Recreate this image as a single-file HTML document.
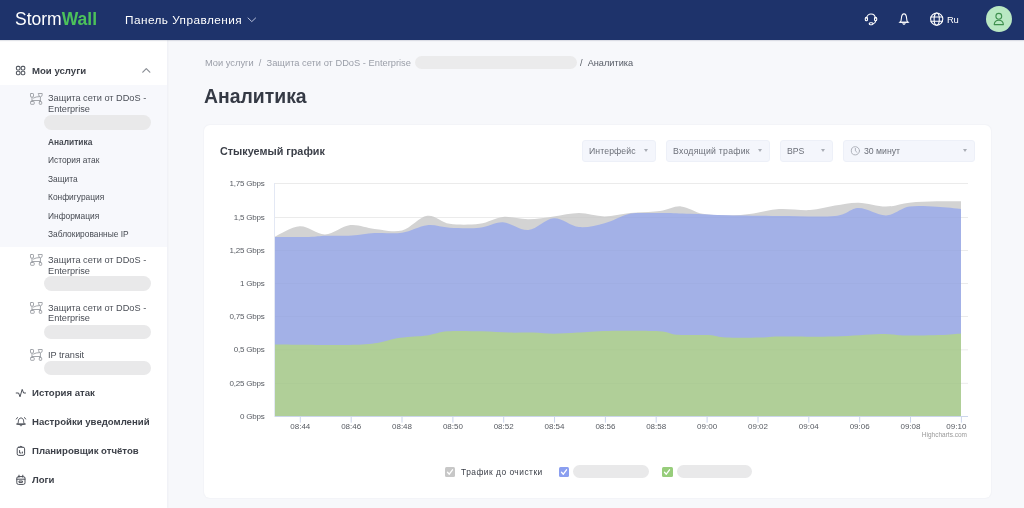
<!DOCTYPE html>
<html><head><meta charset="utf-8">
<style>
*{margin:0;padding:0;box-sizing:border-box}
html,body{width:1024px;height:508px;overflow:hidden;background:#f7f8fb;font-family:"Liberation Sans",sans-serif;color:#353a45}
.a{position:absolute;white-space:nowrap;line-height:1;will-change:transform}
#hdr{position:absolute;left:0;top:0;width:1024px;height:40px;background:#1e336b;box-shadow:0 1px 1px rgba(20,30,70,0.12);z-index:2}
#side{position:absolute;left:0;top:40px;width:167px;height:468px;background:#fff;box-shadow:1px 0 2px rgba(20,30,70,0.04)}
#sub{position:absolute;left:0;top:85px;width:167px;height:162px;background:#f7f8fc}
.pill{position:absolute;background:#e9e9ea;border-radius:8px}
.st{font-size:9.2px;color:#4b4f57}
.sb{font-size:9.6px;font-weight:bold;color:#3d4149}
.ss{font-size:8.4px;color:#464a52}
#card{position:absolute;left:204px;top:125px;width:787px;height:373px;background:#fff;border-radius:6px;box-shadow:0 0 2px rgba(30,40,80,0.07)}
.dd{position:absolute;top:140px;height:22px;background:#f4f6fc;border:1px solid #edf0f8;border-radius:3px;font-size:8.7px;color:#6b6f78;will-change:transform}
.dd span{position:absolute;top:6px;line-height:1}
.car{position:absolute;top:8px;width:0;height:0;border-left:2.5px solid transparent;border-right:2.5px solid transparent;border-top:3.8px solid #a9adb5}
.ch{position:absolute;left:0;top:0;will-change:transform}
.ic{position:absolute;left:0;top:0;z-index:3}
.cb{position:absolute;width:10px;height:10px;border-radius:1.5px;top:467px}
</style></head><body>
<div id="hdr">
  <div class="a" style="left:15px;top:10.5px;font-size:17.5px;color:#fff;letter-spacing:0px">Storm<span style="color:#4cc25a;font-weight:bold">Wall</span></div>
  <div class="a" style="left:125px;top:14.6px;font-size:11.8px;color:#fff;letter-spacing:0.45px">Панель Управления</div>
  <div class="a" style="left:946.5px;top:14.5px;font-size:9.4px;color:#fff;letter-spacing:-0.3px">Ru</div>
  <div style="position:absolute;left:986px;top:6px;width:26px;height:26px;border-radius:50%;background:#b9e8c3"></div>
</div>
<div id="side"></div>
<div id="sub"></div>
<div id="card"></div>
<svg class="ch" width="1024" height="508" viewBox="0 0 1024 508">
<line x1="274.8" y1="183.5" x2="968" y2="183.5" stroke="#efefef" stroke-width="1"/>
<line x1="274.8" y1="217.5" x2="968" y2="217.5" stroke="#efefef" stroke-width="1"/>
<line x1="274.8" y1="250.5" x2="968" y2="250.5" stroke="#efefef" stroke-width="1"/>
<line x1="274.8" y1="283.5" x2="968" y2="283.5" stroke="#efefef" stroke-width="1"/>
<line x1="274.8" y1="316.5" x2="968" y2="316.5" stroke="#efefef" stroke-width="1"/>
<line x1="274.8" y1="349.8" x2="968" y2="349.8" stroke="#efefef" stroke-width="1"/>
<line x1="274.8" y1="383.3" x2="968" y2="383.3" stroke="#efefef" stroke-width="1"/>
<path d="M274.8,236.7 C279.0,235.0 291.4,226.7 299.8,226.3 C308.2,225.9 316.6,234.6 325.0,234.4 C333.4,234.2 342.1,226.0 350.3,225.1 C358.6,224.2 365.9,228.0 374.5,228.9 C383.1,229.8 393.2,232.7 402.0,230.5 C410.8,228.3 419.2,216.9 427.2,215.8 C435.1,214.7 441.0,222.5 449.7,223.8 C458.4,225.1 470.6,224.9 479.5,223.8 C488.4,222.7 494.9,217.8 503.0,217.0 C511.1,216.2 519.9,219.4 528.4,219.3 C536.9,219.2 545.3,217.5 553.7,216.4 C562.1,215.3 570.5,213.0 579.0,213.0 C587.5,213.0 596.0,216.4 604.5,216.4 C613.0,216.4 620.8,213.9 630.0,213.0 C639.2,212.1 651.5,212.1 660.0,211.0 C668.5,209.9 673.9,205.9 681.0,206.4 C688.1,206.9 694.9,212.3 702.7,213.8 C710.5,215.3 719.5,215.5 728.0,215.4 C736.5,215.3 745.0,214.5 753.5,213.4 C762.0,212.3 769.6,209.7 779.0,209.1 C788.4,208.5 800.7,210.7 810.0,210.1 C819.3,209.5 826.9,206.8 835.0,205.6 C843.1,204.4 850.1,202.5 858.6,202.7 C867.1,202.9 877.5,206.6 886.0,206.6 C894.5,206.6 900.9,203.6 909.4,202.7 C917.9,201.8 928.1,201.5 936.7,201.3 C945.3,201.1 957.0,201.3 961.0,201.3 L961.0,416.3 L274.8,416.3 Z" fill="#d3d3d3"/>
<path d="M274.8,236.9 C280.5,236.9 300.5,237.1 309.0,236.9 C317.5,236.7 318.5,235.9 325.7,235.7 C332.9,235.5 343.9,236.0 352.0,235.6 C360.1,235.2 366.2,233.6 374.5,233.1 C382.8,232.6 393.2,234.0 402.0,232.7 C410.8,231.4 419.2,226.0 427.2,225.2 C435.1,224.4 441.0,227.3 449.7,227.7 C458.4,228.1 470.6,228.6 479.5,227.7 C488.4,226.8 494.9,221.8 503.0,222.2 C511.1,222.6 519.9,230.7 528.4,230.0 C536.9,229.3 545.3,218.8 553.7,218.3 C562.1,217.8 570.5,226.3 579.0,227.1 C587.5,227.9 596.3,225.3 604.5,223.2 C612.7,221.0 621.2,215.9 628.0,214.2 C634.8,212.5 638.8,213.2 645.0,213.0 C651.2,212.8 657.5,212.9 665.0,213.0 C672.5,213.1 679.5,213.4 690.0,213.8 C700.5,214.2 713.2,214.9 728.0,215.3 C742.8,215.7 761.2,215.9 779.0,216.0 C796.8,216.1 821.7,217.3 835.0,216.0 C848.3,214.7 850.1,208.1 858.6,208.0 C867.1,207.9 877.5,215.6 886.0,215.4 C894.5,215.2 900.9,208.0 909.4,206.6 C917.9,205.2 928.1,206.4 936.7,206.8 C945.3,207.2 957.0,208.6 961.0,209.0 L961.0,416.3 L274.8,416.3 Z" fill="#a3b1e7"/>
<path d="M274.8,344.6 C289.3,344.6 341.1,345.7 362.0,344.6 C382.9,343.5 389.2,339.3 400.0,337.8 C410.8,336.3 419.1,336.5 427.0,335.4 C434.9,334.3 438.5,332.0 447.7,331.3 C456.9,330.6 471.8,331.1 482.0,331.3 C492.2,331.5 500.5,332.4 509.0,332.6 C517.5,332.8 525.5,332.4 533.0,332.6 C540.5,332.8 546.3,333.7 553.7,333.7 C561.1,333.7 568.6,333.1 577.6,332.6 C586.6,332.2 594.4,331.2 608.0,331.0 C621.6,330.8 647.5,330.7 659.0,331.3 C670.5,331.9 668.6,334.2 676.8,334.8 C685.0,335.4 700.2,334.6 708.4,335.1 C716.6,335.6 717.2,337.2 726.0,337.6 C734.8,338.0 752.2,337.8 761.0,337.6 C769.8,337.4 766.5,336.7 778.8,336.5 C791.1,336.3 818.0,336.9 835.0,336.5 C852.0,336.1 869.0,334.2 880.7,334.0 C892.4,333.8 895.0,335.3 905.0,335.5 C915.0,335.7 931.2,335.5 940.5,335.1 C949.8,334.8 957.6,333.7 961.0,333.4 L961.0,416.3 L274.8,416.3 Z" fill="#b0cf98"/>
<line x1="274.8" y1="183.5" x2="968" y2="183.5" stroke="rgba(0,0,0,0.015)" stroke-width="1"/>
<line x1="274.8" y1="217.5" x2="968" y2="217.5" stroke="rgba(0,0,0,0.015)" stroke-width="1"/>
<line x1="274.8" y1="250.5" x2="968" y2="250.5" stroke="rgba(0,0,0,0.015)" stroke-width="1"/>
<line x1="274.8" y1="283.5" x2="968" y2="283.5" stroke="rgba(0,0,0,0.015)" stroke-width="1"/>
<line x1="274.8" y1="316.5" x2="968" y2="316.5" stroke="rgba(0,0,0,0.015)" stroke-width="1"/>
<line x1="274.8" y1="349.8" x2="968" y2="349.8" stroke="rgba(0,0,0,0.015)" stroke-width="1"/>
<line x1="274.8" y1="383.3" x2="968" y2="383.3" stroke="rgba(0,0,0,0.015)" stroke-width="1"/>
<line x1="274.5" y1="183" x2="274.5" y2="416.3" stroke="#e3e8f4" stroke-width="1"/>
<line x1="300.3" y1="416" x2="300.3" y2="422.6" stroke="#ccd6eb" stroke-width="1"/>
<line x1="351.2" y1="416" x2="351.2" y2="422.6" stroke="#ccd6eb" stroke-width="1"/>
<line x1="402.0" y1="416" x2="402.0" y2="422.6" stroke="#ccd6eb" stroke-width="1"/>
<line x1="452.9" y1="416" x2="452.9" y2="422.6" stroke="#ccd6eb" stroke-width="1"/>
<line x1="503.7" y1="416" x2="503.7" y2="422.6" stroke="#ccd6eb" stroke-width="1"/>
<line x1="554.5" y1="416" x2="554.5" y2="422.6" stroke="#ccd6eb" stroke-width="1"/>
<line x1="605.4" y1="416" x2="605.4" y2="422.6" stroke="#ccd6eb" stroke-width="1"/>
<line x1="656.2" y1="416" x2="656.2" y2="422.6" stroke="#ccd6eb" stroke-width="1"/>
<line x1="707.1" y1="416" x2="707.1" y2="422.6" stroke="#ccd6eb" stroke-width="1"/>
<line x1="758.0" y1="416" x2="758.0" y2="422.6" stroke="#ccd6eb" stroke-width="1"/>
<line x1="808.8" y1="416" x2="808.8" y2="422.6" stroke="#ccd6eb" stroke-width="1"/>
<line x1="859.7" y1="416" x2="859.7" y2="422.6" stroke="#ccd6eb" stroke-width="1"/>
<line x1="910.5" y1="416" x2="910.5" y2="422.6" stroke="#ccd6eb" stroke-width="1"/>
<line x1="961.4" y1="416" x2="961.4" y2="422.6" stroke="#ccd6eb" stroke-width="1"/>
<line x1="274.8" y1="416.5" x2="968" y2="416.5" stroke="#ccd6eb" stroke-width="1"/>
<g font-size="8" fill="#575b62" font-family="Liberation Sans, sans-serif"><text x="264.6" y="186.1" text-anchor="end" letter-spacing="-0.2">1,75 Gbps</text>
<text x="264.6" y="220.1" text-anchor="end" letter-spacing="-0.2">1,5 Gbps</text>
<text x="264.6" y="253.1" text-anchor="end" letter-spacing="-0.2">1,25 Gbps</text>
<text x="264.6" y="286.1" text-anchor="end" letter-spacing="-0.2">1 Gbps</text>
<text x="264.6" y="319.1" text-anchor="end" letter-spacing="-0.2">0,75 Gbps</text>
<text x="264.6" y="352.4" text-anchor="end" letter-spacing="-0.2">0,5 Gbps</text>
<text x="264.6" y="385.9" text-anchor="end" letter-spacing="-0.2">0,25 Gbps</text>
<text x="264.6" y="419.1" text-anchor="end" letter-spacing="-0.2">0 Gbps</text>
<text x="300.3" y="428.8" text-anchor="middle">08:44</text>
<text x="351.2" y="428.8" text-anchor="middle">08:46</text>
<text x="402.0" y="428.8" text-anchor="middle">08:48</text>
<text x="452.9" y="428.8" text-anchor="middle">08:50</text>
<text x="503.7" y="428.8" text-anchor="middle">08:52</text>
<text x="554.5" y="428.8" text-anchor="middle">08:54</text>
<text x="605.4" y="428.8" text-anchor="middle">08:56</text>
<text x="656.2" y="428.8" text-anchor="middle">08:58</text>
<text x="707.1" y="428.8" text-anchor="middle">09:00</text>
<text x="758.0" y="428.8" text-anchor="middle">09:02</text>
<text x="808.8" y="428.8" text-anchor="middle">09:04</text>
<text x="859.7" y="428.8" text-anchor="middle">09:06</text>
<text x="910.5" y="428.8" text-anchor="middle">09:08</text>
<text x="966.4" y="428.8" text-anchor="end">09:10</text></g>
<text x="967" y="436.5" text-anchor="end" font-size="6.5" fill="#999" font-family="Liberation Sans, sans-serif">Highcharts.com</text>
</svg>
<svg class="ic" width="1024" height="508" viewBox="0 0 1024 508" fill="none" stroke-linecap="round" stroke-linejoin="round">
 <!-- header chevron -->
 <path d="M248,18 L251.8,21.6 L255.6,18" stroke="#b8c0da" stroke-width="1"/>
 <!-- headset -->
 <g stroke="#fff" stroke-width="1.1">
  <path d="M866.8,18.2 C866.8,12.6 875.2,12.6 875.2,18.2"/>
  <rect x="865.3" y="17.4" width="2.2" height="3.4" rx="1"/>
  <rect x="874.5" y="17.4" width="2.2" height="3.4" rx="1"/>
  <path d="M875.6,21 C875.4,22.8 874.6,23.6 873.2,23.8"/>
  <rect x="869.2" y="22.8" width="3.8" height="1.9" rx="0.95"/>
 </g>
 <!-- bell -->
 <g stroke="#fff" stroke-width="1.1">
  <path d="M900.3,22.2 C901.2,21.2 901.3,19.6 901.4,18.2 C901.6,15.3 902.6,13.9 904,13.9 C905.4,13.9 906.4,15.3 906.6,18.2 C906.7,19.6 906.8,21.2 907.7,22.2 Z"/>
  <path d="M899.3,22.2 L908.7,22.2"/>
  <path d="M902.8,22.8 C903,24.9 905,24.9 905.2,22.8"/>
 </g>
 <!-- globe -->
 <g stroke="#fff" stroke-width="1.1">
  <circle cx="936.7" cy="19.1" r="6.1"/>
  <ellipse cx="936.7" cy="19.1" rx="2.6" ry="6.1"/>
  <path d="M931,17 L942.4,17 M931,21.3 L942.4,21.3"/>
 </g>
 <!-- avatar person -->
 <g stroke="#3e8f4e" stroke-width="1.1">
  <circle cx="998.8" cy="16.3" r="2.9"/>
  <path d="M994.2,24.6 C994.4,21.6 996.2,20.3 998.8,20.3 C1001.4,20.3 1003.2,21.6 1003.4,24.6 Z"/>
 </g>
 <!-- sidebar grid icon -->
 <g stroke="#555a63" stroke-width="1.1">
  <rect x="16.4" y="66.4" width="3.6" height="3.6" rx="1.2"/>
  <rect x="21.2" y="66.4" width="3.6" height="3.6" rx="1.2"/>
  <rect x="16.4" y="71.2" width="3.6" height="3.6" rx="1.2"/>
  <rect x="21.2" y="71.2" width="3.6" height="3.6" rx="1.2"/>
 </g>
 <path d="M142.8,72.2 L146.3,68.6 L149.8,72.2" stroke="#8a8e95" stroke-width="1.2"/>
 <!-- bottom icons -->
 <g stroke="#4a4e57" stroke-width="1">
  <path d="M16.2,393 L18.6,393 L20,396.8 L22.2,389.4 L23.6,393 L25.5,393"/>
  <path d="M17.6,424 C18.6,423 18.2,421.5 18.5,420.2 C18.9,418.6 19.9,418 21,418 C22.1,418 23.1,418.6 23.5,420.2 C23.8,421.5 23.4,423 24.4,424 Z M16.6,424 L25.4,424"/>
  <path d="M19.8,424.6 C20,426.4 22,426.4 22.2,424.6"/>
  <path d="M16.4,419 L17.4,417.6 M25.6,419 L24.6,417.6"/>
  <rect x="17.2" y="447.2" width="7.4" height="8.2" rx="1.6"/>
  <path d="M19.6,447.3 C19.6,445.8 22.2,445.8 22.2,447.3"/>
  <path d="M19.6,450.5 L19.6,453 L21,453 M22.4,452 L22.4,453"/>
  <rect x="16.8" y="476.6" width="8.2" height="7.8" rx="1.6"/>
  <path d="M16.8,479.2 L25,479.2 M19,475.2 L19,477.2 M22.8,475.2 L22.8,477.2"/>
  <rect x="19.4" y="481" width="3" height="1.4"/>
 </g>
 <!-- dropdown clock -->
 
 <!-- network icons -->
 <g stroke="#9a9da3" stroke-width="0.9">
  <rect x="30.5" y="93.5" width="3" height="3.6" rx="0.6"/>
  <path d="M38.6,93.5 H42.2 V94.8 Q42.2,96.4 40.4,97 Q38.6,96.4 38.6,94.8 Z"/>
  <path d="M32,97.1 V101 M40.4,97 V101 M32,100.5 H40.4 M33.5,98 Q36,96.6 39.2,96.6"/>
  <rect x="30.6" y="101.5" width="3.6" height="2.8" rx="0.5"/>
  <rect x="39.3" y="101.5" width="2.4" height="2.8" rx="0.5"/>
 </g>
<g transform="translate(0,161)"><g stroke="#9a9da3" stroke-width="0.9">
  <rect x="30.5" y="93.5" width="3" height="3.6" rx="0.6"/>
  <path d="M38.6,93.5 H42.2 V94.8 Q42.2,96.4 40.4,97 Q38.6,96.4 38.6,94.8 Z"/>
  <path d="M32,97.1 V101 M40.4,97 V101 M32,100.5 H40.4 M33.5,98 Q36,96.6 39.2,96.6"/>
  <rect x="30.6" y="101.5" width="3.6" height="2.8" rx="0.5"/>
  <rect x="39.3" y="101.5" width="2.4" height="2.8" rx="0.5"/>
 </g></g>
<g transform="translate(0,209)"><g stroke="#9a9da3" stroke-width="0.9">
  <rect x="30.5" y="93.5" width="3" height="3.6" rx="0.6"/>
  <path d="M38.6,93.5 H42.2 V94.8 Q42.2,96.4 40.4,97 Q38.6,96.4 38.6,94.8 Z"/>
  <path d="M32,97.1 V101 M40.4,97 V101 M32,100.5 H40.4 M33.5,98 Q36,96.6 39.2,96.6"/>
  <rect x="30.6" y="101.5" width="3.6" height="2.8" rx="0.5"/>
  <rect x="39.3" y="101.5" width="2.4" height="2.8" rx="0.5"/>
 </g></g>
<g transform="translate(0,256)"><g stroke="#9a9da3" stroke-width="0.9">
  <rect x="30.5" y="93.5" width="3" height="3.6" rx="0.6"/>
  <path d="M38.6,93.5 H42.2 V94.8 Q42.2,96.4 40.4,97 Q38.6,96.4 38.6,94.8 Z"/>
  <path d="M32,97.1 V101 M40.4,97 V101 M32,100.5 H40.4 M33.5,98 Q36,96.6 39.2,96.6"/>
  <rect x="30.6" y="101.5" width="3.6" height="2.8" rx="0.5"/>
  <rect x="39.3" y="101.5" width="2.4" height="2.8" rx="0.5"/>
 </g></g>
</svg>
<!-- sidebar text -->
<div class="a sb" style="left:32px;top:65.7px">Мои услуги</div>
<div class="a st" style="left:47.5px;top:94px">Защита сети от DDoS -</div>
<div class="a st" style="left:47.5px;top:104.5px">Enterprise</div>
<div class="pill" style="left:44px;top:115px;width:107px;height:15px"></div>
<div class="a ss" style="left:47.5px;top:137.5px;font-weight:bold">Аналитика</div>
<div class="a ss" style="left:47.5px;top:156px">История атак</div>
<div class="a ss" style="left:47.5px;top:174.5px">Защита</div>
<div class="a ss" style="left:47.5px;top:193px">Конфигурация</div>
<div class="a ss" style="left:47.5px;top:211.5px">Информация</div>
<div class="a ss" style="left:47.5px;top:230px">Заблокированные IP</div>
<div class="a st" style="left:47.5px;top:256.3px">Защита сети от DDoS -</div>
<div class="a st" style="left:47.5px;top:266.8px">Enterprise</div>
<div class="pill" style="left:44px;top:276px;width:107px;height:15.4px"></div>
<div class="a st" style="left:47.5px;top:303.6px">Защита сети от DDoS -</div>
<div class="a st" style="left:47.5px;top:314.1px">Enterprise</div>
<div class="pill" style="left:44px;top:325px;width:107px;height:14px"></div>
<div class="a st" style="left:47.5px;top:351px">IP transit</div>
<div class="pill" style="left:44px;top:360.5px;width:107px;height:14.5px"></div>
<div class="a sb" style="left:32px;top:388px">История атак</div>
<div class="a sb" style="left:32px;top:417px">Настройки уведомлений</div>
<div class="a sb" style="left:32px;top:446px">Планировщик отчётов</div>
<div class="a sb" style="left:32px;top:475px">Логи</div>
<!-- main -->
<div class="a" style="left:204.5px;top:58.7px;font-size:9.3px;color:#9a9ea8">Мои услуги &nbsp;/ &nbsp;Защита сети от DDoS - Enterprise</div>
<div class="pill" style="left:415px;top:56px;width:162px;height:13px;background:#ebebec"></div>
<div class="a" style="left:579.5px;top:58.7px;font-size:9.2px;color:#555a64">/ &nbsp;Аналитика</div>
<div class="a" style="left:204px;top:87px;font-size:19.4px;font-weight:bold;color:#353a45">Аналитика</div>
<div class="a" style="left:220px;top:145.8px;font-size:10.8px;font-weight:bold;color:#3b3f48">Стыкуемый график</div>
<div class="dd" style="left:582px;width:74px"><span style="left:6px;letter-spacing:0.1px">Интерфейс</span><i class="car" style="left:61px"></i></div>
<div class="dd" style="left:666px;width:103.5px"><span style="left:6px;letter-spacing:0.25px">Входящий трафик</span><i class="car" style="left:91px"></i></div>
<div class="dd" style="left:780px;width:53px"><span style="left:6px">BPS</span><i class="car" style="left:40px"></i></div>
<div class="dd" style="left:843px;width:132px"><span style="left:20px">30 минут</span><i class="car" style="left:119px"></i></div>
<!-- legend -->
<div class="cb" style="left:445px;background:#c7c7c7"></div>
<div class="cb" style="left:559px;background:#8b9ff0"></div>
<div class="cb" style="left:662px;width:10.5px;background:#97cd7b"></div>
<svg class="ic" width="1024" height="508" viewBox="0 0 1024 508" fill="none" stroke="#fff" stroke-width="1.3" stroke-linecap="round" stroke-linejoin="round">
 <g stroke="#a9adb5" stroke-width="0.9"><circle cx="855.4" cy="150.8" r="4.1"/><path d="M855.4,148.4 L855.4,150.9 L857,152.3"/></g>
 <path d="M447.5,472.3 L449.3,474.2 L452.5,469.8"/>
 <path d="M561.5,472.3 L563.3,474.2 L566.5,469.8"/>
 <path d="M664.5,472.3 L666.3,474.2 L669.5,469.8"/>
</svg>
<div class="a" style="left:460.5px;top:468px;font-size:8.4px;color:#3a3e47;letter-spacing:0.5px">Трафик до очистки</div>
<div class="pill" style="left:573px;top:465px;width:76px;height:13px;background:#e9e9ea"></div>
<div class="pill" style="left:677px;top:465px;width:75px;height:13px;background:#e9e9ea"></div>
</body></html>
